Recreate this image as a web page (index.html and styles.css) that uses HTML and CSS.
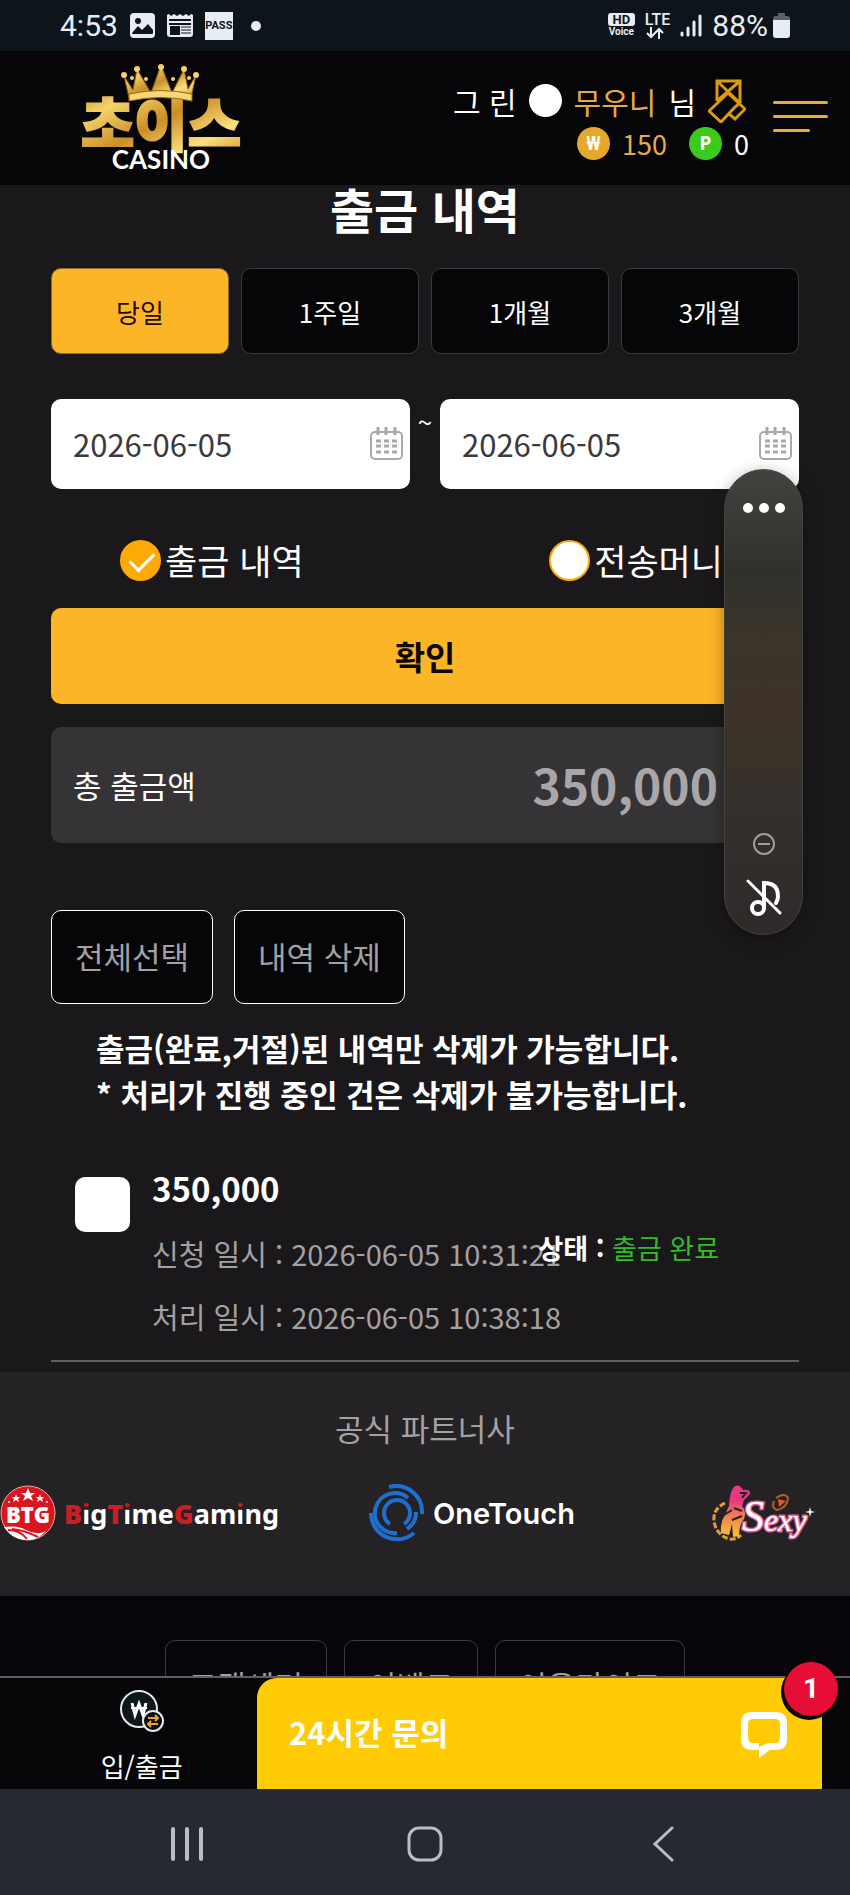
FILE: index.html
```
<!DOCTYPE html>
<html lang="ko">
	<head>
		<meta charset="utf-8" />
		<meta name="viewport" content="width=device-width, initial-scale=1" />
		<title>출금 내역</title>
		<link rel="stylesheet" href="styles.css">
	</head>

	<body>
	<!-- 상태 표시줄 -->
	<div class="status">
		<div class="status-left">
			<span class="time">4:53</span>
			<svg width="25" height="25" viewBox="0 0 25 25">
				<rect width="25" height="25" rx="4" fill="#e8edf3"/>
				<circle cx="8" cy="8" r="3" fill="#0e151a"/>
				<path d="M2 20l6-7 4 4 6-6 5 6v3q0 1-1 1H3q-1 0-1-1z" fill="#0e151a"/>
			</svg>
			<svg width="26" height="25" viewBox="0 0 26 25">
				<path d="M0 2l2-1 2 2 3-2 3 2 3-2 3 2 3-2 3 2 2-2 2 1v19q0 3-3 3H3q-3 0-3-3z" fill="#e8edf3"/>
				<path d="M2 7h22M2 11h22" stroke="#0e151a" stroke-width="2"/>
				<path d="M3 13h10v9H3z" fill="#0e151a"/>
				<path d="M14 14h10M14 17h10M14 20h10" stroke="#0e151a" stroke-width="1"/>
			</svg>
			<span class="pass">PASS</span>
			<span class="dot"></span>
		</div>
		<div class="status-right">
			<span class="hd"><b>HD</b><i>Voice</i></span>
			<span class="lte">LTE
				<svg width="18" height="12" viewBox="0 0 18 12" fill="none" stroke="#e8edf3" stroke-width="2">
					<path d="M5 0v10M1 6l4 4 4-4M13 12V2M9 6l4-4 4 4"/>
				</svg>
			</span>
			<svg width="22" height="23" viewBox="0 0 22 23" stroke="#e8edf3" stroke-width="3" stroke-linecap="round">
				<path d="M2 19v2M8 14v7M14 8v13M20 2v19"/>
			</svg>
			<span class="percent">88%</span>
			<svg width="17" height="25" viewBox="0 0 17 25">
				<path d="M5 0h7v3h2q3 0 3 3v3H0V6q0-3 3-3h2z" fill="#5b6166"/>
				<path d="M0 7h17v15q0 3-3 3H3q-3 0-3-3z" fill="#e8edf3"/>
			</svg>
		</div>
	</div>

	<header class="header">
		<a class="logo" href="#" aria-label="초이스 CASINO">
			<svg width="166" height="112" viewBox="0 0 166 112">
				<defs>
					<linearGradient id="gold" x1="0" y1="0" x2="1" y2="1">
						<stop offset="0" stop-color="#b8791c"/>
						<stop offset="0.25" stop-color="#f5d36c"/>
						<stop offset="0.5" stop-color="#c98f25"/>
						<stop offset="0.75" stop-color="#fbe080"/>
						<stop offset="1" stop-color="#d08a1d"/>
					</linearGradient>
				</defs>
				<text x="83" y="84" class="logo-ko">초이스</text>
				<path d="M51 36L46 14l9 14 4-21 14 24 10-28 11 28 12-24 4 20 8-14-5 23q-31-7-62 0z" fill="url(#gold)" stroke="#8d5a12" stroke-width="1"/>
				<path d="M51 32q32-7 63 0v7q-31-7-63 0z" fill="#f7d777" stroke="#9a6314" stroke-width="1"/>
				<g fill="#f6d06a">
					<circle cx="46" cy="13" r="3"/><circle cx="59" cy="7" r="3"/><circle cx="83" cy="5" r="3"/>
					<circle cx="106" cy="7" r="3"/><circle cx="118" cy="13" r="3"/>
					<circle cx="54" cy="16" r="2"/><circle cx="68" cy="17" r="2"/><circle cx="95" cy="17" r="2"/><circle cx="111" cy="16" r="2"/>
				</g>
				<text x="83" y="107" class="logo-en">CASINO</text>
			</svg>
		</a>
		<div class="user">
			<div class="user-row">
				<span>그 린</span>
				<span class="level"></span>
				<span class="gold">무우니</span>
				<span>님</span>
				<svg class="coupon" width="38" height="44" viewBox="0 0 38 44" fill="none" stroke="#d99b14" stroke-width="3">
					<path d="M9 22V2h23v22M9 2l23 22M32 2L9 22M20 14L1 32l12 11 14-15M20 14l17 16-10 10-7-6M27 28l5-4"/>
				</svg>
			</div>
			<div class="user-row money">
				<span class="coin won">₩</span><span class="gold">150</span>
				<span class="coin point">P</span><span>0</span>
			</div>
		</div>
		<button class="menu" aria-label="메뉴"><i></i><i></i><i></i></button>
	</header>

	<main class="content">
		<h1>출금 내역</h1>
		<div class="period">
			<button class="on">당일</button>
			<button>1주일</button>
			<button>1개월</button>
			<button>3개월</button>
		</div>

		<div class="dates">
			<div class="date">
				<input type="text" value="2026-06-05" aria-label="시작일">
				<svg width="34" height="34" viewBox="0 0 34 34" fill="none" stroke="#aaa8aa" stroke-width="2">
					<rect x="1" y="5" width="31" height="27" rx="4"/>
					<path d="M8 0v8M16 0v8M25 0v8" stroke-width="3"/>
					<path d="M6 14h22M6 19h22M6 25h22" stroke-width="3" stroke-dasharray="5 3"/>
				</svg>
			</div>
			<span class="tilde">~</span>
			<div class="date">
				<input type="text" value="2026-06-05" aria-label="종료일">
				<svg width="34" height="34" viewBox="0 0 34 34" fill="none" stroke="#aaa8aa" stroke-width="2">
					<rect x="1" y="5" width="31" height="27" rx="4"/>
					<path d="M8 0v8M16 0v8M25 0v8" stroke-width="3"/>
					<path d="M6 14h22M6 19h22M6 25h22" stroke-width="3" stroke-dasharray="5 3"/>
				</svg>
			</div>
		</div>

		<div class="kinds">
			<label><input type="radio" name="kind" checked>출금 내역</label>
			<label><input type="radio" name="kind">전송머니</label>
		</div>
		<button class="confirm">확인</button>

		<div class="total">
			<span>총 출금액</span>
			<strong>350,000</strong>
		</div>

		<div class="actions">
			<button>전체선택</button>
			<button>내역 삭제</button>
		</div>
		<p class="notice">출금(완료,거절)된 내역만 삭제가 가능합니다.<br>* 처리가 진행 중인 건은 삭제가 불가능합니다.</p>

		<div class="item">
			<input type="checkbox" aria-label="350,000 선택">
			<div class="item-text">
				<strong>350,000</strong>
				<p>신청 일시 : 2026-06-05 10:31:21</p>
				<p>처리 일시 : 2026-06-05 10:38:18</p>
			</div>
			<div class="state"><b>상태 :</b> <span>출금 완료</span></div>
		</div>
	</main>

	<section class="partners">
		<h2>공식 파트너사</h2>
		<div class="partner-list">
			<div class="btg">
				<svg width="56" height="56" viewBox="0 0 56 56">
					<circle cx="28" cy="28" r="27" fill="#d9151f" stroke="#f3a9aa" stroke-width="1"/>
					<path d="M28 3l2 5h5l-4 3 2 5-5-3-5 3 2-5-4-3h5z" fill="#fff"/>
					<path d="M16 9l1 3h3l-2 2 1 3-3-2-3 2 1-3-2-2h3zM40 9l1 3h3l-2 2 1 3-3-2-3 2 1-3-2-2h3z" fill="#fff"/>
					<circle cx="9" cy="17" r="1" fill="#fff"/><circle cx="47" cy="17" r="1" fill="#fff"/>
					<path d="M4 42q14-2 22 3 11 6 20 1-8 9-18 9Q12 55 4 42z" fill="#fff"/>
					<path d="M8 45q12 0 19 9M12 44q12 1 26 8" stroke="#d9151f" stroke-width="2" fill="none"/>
					<text x="28" y="38" class="btg-mark">BTG</text>
				</svg>
				<span class="btg-name"><b>B</b><i>i</i>g<b>T</b><i>i</i>me<b>G</b>am<i>i</i>ng</span>
			</div>
			<div class="onetouch">
				<svg width="56" height="58" viewBox="0 0 56 58" fill="none" stroke="#1e6fd0" stroke-width="4">
					<path d="M20 3a26 26 0 0 1 33 27M2 29a26 26 0 0 0 43 20"/>
					<path d="M39 14a20 20 0 1 0-11 35M47 28a20 20 0 0 1-9 17"/>
					<path d="M21 40a13 13 0 1 1 14 0"/>
				</svg>
				<span>OneTouch</span>
			</div>
			<div class="sexy">
				<svg width="106" height="58" viewBox="0 0 106 58">
					<defs>
						<linearGradient id="chip" x1="0" y1="0" x2="0" y2="1">
							<stop offset="0.3" stop-color="#e8387f"/>
							<stop offset="0.6" stop-color="#ef8350"/>
							<stop offset="1" stop-color="#f4c52d"/>
						</linearGradient>
					</defs>
					<path d="M15 19Q3 25 4 36q1 14 15 19 7 1 12-4" fill="none" stroke="#e89a3c" stroke-width="3" stroke-dasharray="6 2"/>
					<path d="M19 22q1-16 5-19 5-4 9 3 8-1 7 4l-6 6-2 6q5 5 2 13-5 5-5 17l-6 1-1-13-3 11-8-2q-1-11 4-18 2-5 4-9z" fill="url(#chip)"/>
					<path d="M30 9l6 0-4 5M14 31l8-5M24 24l8 3M22 36l10-4" fill="none" stroke="#242224" stroke-width="2"/>
					<path d="M66 14q9-6 12 0-1 10-11 12-6-2-3-9" fill="none" stroke="#b9601e" stroke-width="2"/>
					<path d="M68 15l8 2-7 6z" fill="#e8542c"/>
					<text x="32" y="47" class="sexy-name"><tspan class="big">S</tspan>exy</text>
					<path d="M100 23l1 4 4 1-4 1-1 4-1-4-4-1 4-1z" fill="#fff"/>
				</svg>
			</div>
		</div>
	</section>

	<footer class="footer">
		<a href="#">고객센터</a>
		<a href="#">이벤트</a>
		<a href="#">이용가이드</a>
	</footer>

	<div class="bottom">
		<a class="bank" href="#">
			<svg width="46" height="44" viewBox="0 0 46 44" fill="none">
				<circle cx="20" cy="20" r="18" fill="#0d171c" stroke="#e6e9ec" stroke-width="2"/>
				<path d="M13 14l3 12 4-11 4 11 3-12" stroke="#fff" stroke-width="3"/>
				<path d="M12 19h16" stroke="#fff" stroke-width="2"/>
				<circle cx="34" cy="32" r="10" fill="#0b0b0d" stroke="#e6e9ec" stroke-width="2"/>
				<path d="M29 29h9M36 26l3 3-3 3M39 35h-9M32 32l-3 3 3 3" stroke="#eaa52c" stroke-width="2"/>
			</svg>
			<span>입/출금</span>
		</a>
		<button class="chat">
			<span>24시간 문의</span>
			<svg width="48" height="48" viewBox="0 0 48 48">
				<path d="M12 2h24q11 0 11 11v16q0 11-11 11h-6l-11 8v-8h-7Q1 40 1 29V13Q1 2 12 2zM13 9q-5 0-5 5v14q0 5 5 5h6v4l9-4h7q5 0 5-5V14q0-5-5-5z" fill="#fff" fill-rule="evenodd"/>
			</svg>
			<em>1</em>
		</button>
	</div>

	<nav class="sysnav">
		<button aria-label="최근 앱">
			<svg width="36" height="36" viewBox="0 0 36 36" fill="none" stroke="#b9bec4" stroke-width="4" stroke-linecap="round"><path d="M4 3v30M18 3v30M32 3v30"/></svg>
		</button>
		<button aria-label="홈">
			<svg width="36" height="36" viewBox="0 0 36 36" fill="none" stroke="#b9bec4" stroke-width="3"><rect x="2" y="2" width="32" height="32" rx="10"/></svg>
		</button>
		<button aria-label="뒤로">
			<svg width="36" height="36" viewBox="0 0 36 36" fill="none" stroke="#b9bec4" stroke-width="3" stroke-linecap="round"><path d="M27 2L10 18l17 16"/></svg>
		</button>
	</nav>

	<!-- 볼륨 조절 -->
	<div class="volume">
		<span class="more"><i></i><i></i><i></i></span>
		<svg width="24" height="24" viewBox="0 0 24 24" fill="none" stroke="#a39e9c" stroke-width="2"><circle cx="12" cy="12" r="10"/><path d="M6 12h12"/></svg>
		<svg width="36" height="38" viewBox="0 0 36 38" fill="none" stroke="#fff" stroke-width="4" stroke-linecap="round">
			<circle cx="12" cy="30" r="6"/><path d="M18 30V5q14 0 14 13 0 4-2 7" /><path d="M2 3l32 32" stroke-width="3"/>
		</svg>
	</div>
	</body>
</html>
```
FILE: styles.css
```
*{
	box-sizing: border-box;
}
body{
	margin: 0;
	position: relative;
	background: #1a181b;
	color: #fff;
	font-family: "Noto Sans CJK KR", sans-serif;
	font-size: 31px;
}
button, input{
	margin: 0;
	padding: 0;
	border: 0;
	font-family: inherit;
	color: inherit;
}
a{
	color: inherit;
	text-decoration: none;
}
svg{
	display: block;
	flex: none;
}
h1, h2, p{
	margin: 0;
}

/* 상태 표시줄 */
.status{
	display: flex;
	justify-content: space-between;
	align-items: center;
	height: 51px;
	padding: 0 60px;
	background: #0e151a;
	color: #e8edf3;
	font-family: Roboto, sans-serif;
}
.status-left, .status-right{
	display: flex;
	align-items: center;
}
.time, .percent{
	font-size: 30px;
	line-height: 50px;
}
.status-left{
	gap: 12px;
}
.pass{
	width: 28px;
	background: #e8edf3;
	color: #0e151a;
	font-size: 11px;
	font-weight: 700;
	line-height: 28px;
	text-align: center;
}
.dot{
	width: 10px;
	height: 10px;
	margin-left: 6px;
	border-radius: 50%;
	background: #e8edf3;
}
.status-right{
	gap: 10px;
}
.status-right svg:last-child{
	margin-left: -5px;
}
.hd{
	width: 27px;
	font-size: 10px;
	text-align: center;
}
.hd b{
	display: block;
	border-radius: 3px;
	background: #e8edf3;
	color: #0e151a;
	font-size: 13px;
	line-height: 13px;
}
.hd i{
	display: block;
	font-style: normal;
	font-weight: 700;
	line-height: 12px;
}
.lte{
	display: flex;
	flex-direction: column;
	align-items: center;
	font-size: 16px;
	font-weight: 500;
	line-height: 14px;
}

/* 헤더 */
.header{
	display: flex;
	align-items: center;
	height: 134px;
	padding: 0 22px 0 78px;
	background: #060507;
}
.logo-ko{
	font-size: 58px;
	font-weight: 900;
	text-anchor: middle;
	fill: url(#gold);
	stroke: url(#gold);
	stroke-width: 2px;
}
.logo-en{
	font-family: Lato, sans-serif;
	font-size: 26px;
	font-weight: 700;
	text-anchor: middle;
	fill: #fff;
}
.user{
	margin-left: auto;
	margin-right: 24px;
	padding-top: 8px;
}
.user-row{
	display: flex;
	justify-content: flex-end;
	align-items: center;
	gap: 12px;
	height: 43px;
	font-size: 30px;
}
.coupon{
	margin-right: 3px;
}
.money{
	font-size: 27px;
}
.level, .coin{
	width: 33px;
	height: 33px;
	border-radius: 50%;
	background: #fff;
}
.coin{
	font-family: "Noto Sans", sans-serif;
	font-size: 19px;
	font-weight: 700;
	line-height: 33px;
	text-align: center;
}
.won{
	background: #e6a82c;
}
.point{
	margin-left: 10px;
	background: #3bcb1d;
}
.gold{
	color: #e6ab48;
}
.menu{
	display: flex;
	flex-direction: column;
	gap: 11px;
	width: 55px;
	padding-bottom: 4px;
	background: none;
}
.menu i{
	height: 3px;
	border-radius: 2px;
	background: #e6ab38;
}
.menu i:last-child{
	width: 37px;
}

/* 본문 */
.content{
	padding: 0 51px 10px;
}
h1{
	font-size: 48px;
	line-height: 46px;
	text-align: center;
}
.period{
	display: flex;
	gap: 12px;
	margin-top: 37px;
}
.period button{
	flex: 1;
	height: 86px;
	border: 1px solid #3c3a3e;
	border-radius: 10px;
	background: #060507;
	font-size: 26px;
}
.period .on{
	border-color: #8a6828;
	background: #fdb528;
	color: #1d0d04;
}
.dates{
	display: flex;
	margin-top: 45px;
}
.date{
	position: relative;
	flex: 1;
}
.date input{
	width: 100%;
	height: 90px;
	padding: 0 22px 2px;
	border-radius: 10px;
	background: #fff;
	color: #3b393c;
	font-size: 31px;
}
.date svg{
	position: absolute;
	top: 28px;
	right: 6px;
}
.tilde{
	width: 30px;
	font-size: 26px;
	line-height: 46px;
	text-align: center;
}
.kinds{
	display: flex;
	justify-content: space-between;
	margin: 47px 0 24px;
	padding: 0 76px 0 69px;
	font-size: 35px;
	line-height: 48px;
}
.kinds label{
	display: flex;
	align-items: center;
	gap: 4px;
}
.kinds input{
	appearance: none;
	width: 41px;
	height: 41px;
	border: 2px solid #fda906;
	border-radius: 50%;
	background: #fff;
}
.kinds input:checked{
	background: #fda906;
}
.kinds input:checked::after{
	content: "";
	display: block;
	width: 21px;
	height: 11px;
	margin: 10px 8px;
	border: solid #fff;
	border-width: 0 0 3px 3px;
	transform: rotate(-45deg);
}
.confirm{
	display: block;
	width: 100%;
	height: 96px;
	border-radius: 10px;
	background: #fdb528;
	color: #0d0703;
	font-size: 33px;
	font-weight: 700;
}
.total{
	display: flex;
	justify-content: space-between;
	align-items: center;
	height: 116px;
	margin-top: 23px;
	padding: 0 81px 2px 22px;
	border-radius: 10px;
	background: #353336;
}
.total strong{
	color: #a8a6a9;
	font-size: 48px;
}
.actions{
	display: flex;
	gap: 21px;
	margin-top: 67px;
}
.actions button{
	height: 94px;
	padding: 0 23px 3px;
	border: 1px solid #fff;
	border-radius: 10px;
	background: #060507;
	color: #a3a1a4;
	font-size: 31px;
}
.notice{
	margin-top: 21px;
	padding-left: 45px;
	font-weight: 700;
	line-height: 46px;
}
.item{
	display: flex;
	position: relative;
	margin-top: 48px;
	padding: 0 24px 12px;
	border-bottom: 2px solid #5f5d60;
}
.item input{
	appearance: none;
	flex: none;
	width: 55px;
	height: 55px;
	margin: 12px 22px 0 0;
	border-radius: 10px;
	background: #fff;
}
.item strong{
	display: block;
	margin-bottom: 11px;
	font-size: 33px;
	line-height: 46px;
}
.item p{
	color: #a3a1a4;
	font-size: 29px;
	line-height: 63px;
}
.state{
	position: absolute;
	top: 60px;
	right: 80px;
	font-size: 27px;
	line-height: 46px;
}
.state span{
	color: #35bb28;
}

/* 파트너사 */
.partners{
	height: 224px;
	padding-top: 33px;
	background: #242224;
}
h2{
	color: #a3a1a4;
	font-size: 31px;
	font-weight: 400;
	line-height: 46px;
	text-align: center;
}
.partner-list{
	display: flex;
	align-items: center;
	margin-top: 33px;
	padding-right: 34px;
}
.btg, .onetouch{
	display: flex;
	align-items: center;
	gap: 8px;
	margin-right: 90px;
}
.btg-mark{
	font-family: "Open Sans", sans-serif;
	font-size: 22px;
	font-weight: 800;
	text-anchor: middle;
	fill: #fff;
}
.btg-name{
	font-family: "Noto Sans", sans-serif;
	font-size: 27px;
	font-weight: 700;
}
.btg-name b{
	color: #c81f24;
}
.btg-name i{
	font-style: normal;
	background: linear-gradient(#c81f24 40%, #fff 40%);
	background-clip: text;
	-webkit-background-clip: text;
	color: transparent;
}
.onetouch span{
	font-family: Inter, sans-serif;
	font-size: 29px;
	font-weight: 600;
}
.sexy{
	margin-left: auto;
}
.sexy-name{
	font-family: "Liberation Serif", serif;
	font-size: 32px;
	font-style: italic;
	fill: #fff;
	stroke: #e2639a;
	stroke-width: 3px;
	paint-order: stroke;
}
.sexy-name .big{
	font-size: 44px;
}

/* 하단 */
.footer{
	display: flex;
	justify-content: center;
	align-items: flex-start;
	gap: 17px;
	height: 80px;
	padding-top: 44px;
	background: #070509;
	color: #a3a1a4;
	overflow: hidden;
}
.footer a{
	padding: 0 23px;
	border: 1px solid #3c3a3e;
	border-radius: 10px;
	line-height: 88px;
}
.bottom{
	display: flex;
	position: relative;
	height: 113px;
	border-top: 2px solid #605e62;
	background: #060507;
}
.bank{
	display: flex;
	flex-direction: column;
	align-items: center;
	width: 33.33%;
	padding-top: 11px;
	font-size: 26px;
	line-height: 38px;
}
.bank span{
	margin-top: 14px;
}
.chat{
	display: flex;
	justify-content: space-between;
	align-items: center;
	position: absolute;
	top: 0;
	bottom: 0;
	left: 257px;
	right: 28px;
	padding: 0 34px 0 32px;
	border-radius: 20px 0 0 0;
	background: #fecb04;
	font-size: 31px;
	font-weight: 700;
}
.chat span{
	padding-bottom: 4px;
}
.chat em{
	position: absolute;
	top: -16px;
	right: -16px;
	width: 54px;
	height: 54px;
	border-radius: 50%;
	background: #e60e36;
	box-shadow: -2px 3px 0 1px #0b0505;
	font-family: Roboto, sans-serif;
	font-size: 28px;
	font-style: normal;
	line-height: 54px;
}
.sysnav{
	display: flex;
	height: 106px;
	padding: 4px 68px 0;
	background: #252a30;
}
.sysnav button{
	display: flex;
	flex: 1;
	justify-content: center;
	align-items: center;
	background: none;
}

/* 볼륨 패널 */
.volume{
	display: flex;
	flex-direction: column;
	align-items: center;
	position: absolute;
	top: 469px;
	right: 47px;
	width: 79px;
	height: 466px;
	padding: 33px 0 18px;
	border: 1px solid #45433f;
	border-radius: 40px;
	background: linear-gradient(#42433f 0%, #30312d 22%, #3c3428 38%, #3d3229 52%, #393327 60%, #352f2e 72%, #2f2a29 100%);
	box-shadow: 0 4px 16px rgba(0, 0, 0, 0.35);
}
.more{
	display: flex;
	gap: 6px;
	margin-bottom: auto;
}
.more i{
	width: 10px;
	height: 10px;
	border-radius: 50%;
	background: #fff;
}
.volume svg:last-child{
	margin-top: 22px;
}
```
